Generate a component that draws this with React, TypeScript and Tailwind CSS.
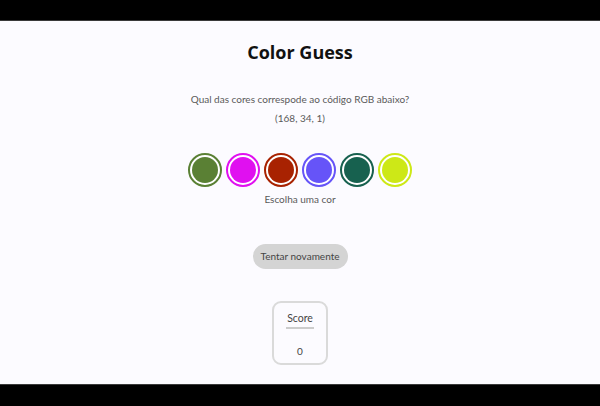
const colors = ["#5a8034", "#e010f0", "#a82201", "#6654f8", "#17614f", "#cde817"];

const App = () => {
  return (
    <div className="flex flex-col w-[600px] h-[406px] bg-black" style={{ fontFamily: "Lato, 'Open Sans', sans-serif" }}>
      <div className="h-[20px] bg-black"></div>
      <div className="h-[364px] bg-[#fcfbff] flex flex-col items-center border-t border-[#3a3a3a]">
        <h1 className="mt-[19px] text-[18px] leading-[24px] font-bold text-[#111]" style={{ fontFamily: "'Open Sans', sans-serif" }}>
          Color Guess
        </h1>
        <p className="mt-[28px] text-[10px] leading-[14px] text-[#5a5a5a]">Qual das cores correspode ao código RGB abaixo?</p>
        <p className="mt-[5px] text-[10px] leading-[14px] text-[#5a5a5a]">(168, 34, 1)</p>

        <div className="mt-[28px] flex gap-[4px]">
          {colors.map((c) => (
            <div
              key={c}
              className="w-[34px] h-[34px] rounded-full border-2 p-[2px] bg-white"
              style={{ borderColor: c }}
            >
              <div className="w-full h-full rounded-full" style={{ backgroundColor: c }}></div>
            </div>
          ))}
        </div>

        <p className="mt-[5px] text-[10px] leading-[14px] text-[#5a5a5a]">Escolha uma cor</p>

        <button className="mt-[38px] h-[25px] w-[95px] rounded-full bg-[#d4d4d4] text-[10px] text-[#444]">
          Tentar novamente
        </button>

        <div className="mt-[32px] w-[56px] h-[64px] rounded-[9px] border-2 border-[#dadada] flex flex-col items-center">
          <span className="mt-[8px] text-[10.5px] leading-[14px] text-[#444]">Score</span>
          <div className="mt-[2px] w-[28px] h-[2px] bg-[#ccc]"></div>
          <span className="mt-[15px] text-[10px] leading-[14px] text-[#444]">0</span>
        </div>
      </div>
      <div className="h-[22px] bg-black border-t border-[#3a3a3a]"></div>
    </div>
  );
};

export default App;
